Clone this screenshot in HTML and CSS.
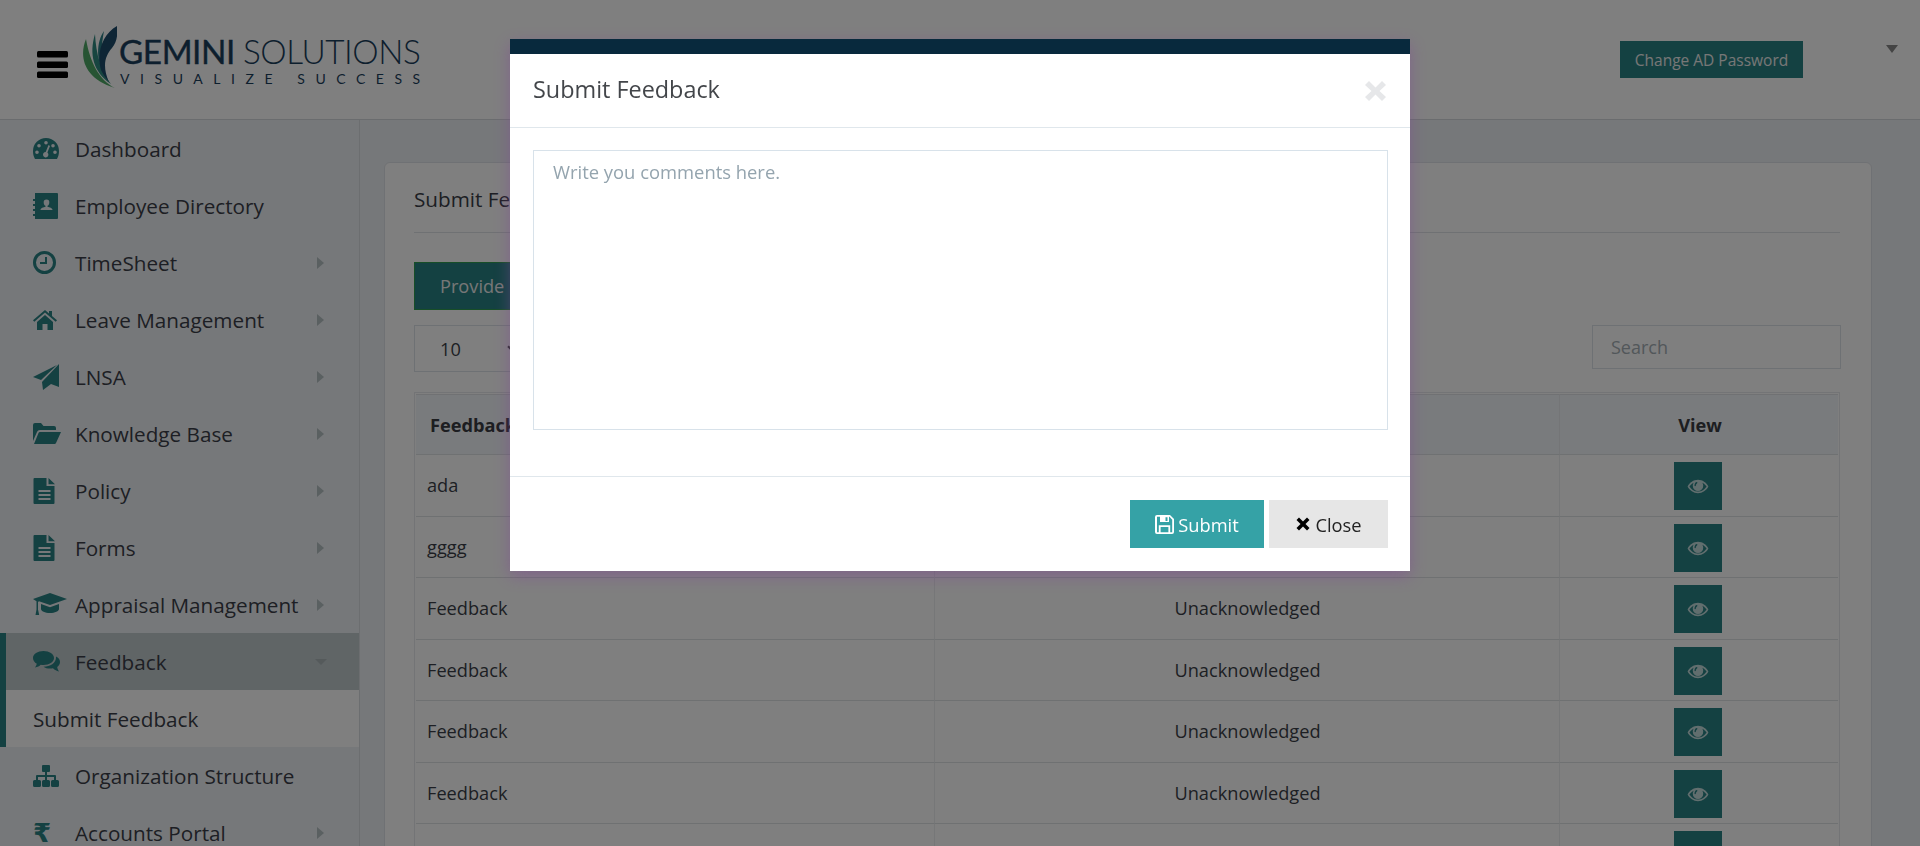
FILE: index.html
```html
<!DOCTYPE html>
<html lang="en">
<head>
<meta charset="utf-8">
<title>Submit Feedback</title>
<link rel="stylesheet" href="styles.css">
</head>
<body>
<svg class="defs" aria-hidden="true">
  <symbol id="i-eye" viewBox="0 0 26 18"><path fill-rule="evenodd" d="M13 1C7.5 1 3 4.4.5 9 3 13.600 7.500 17 13 17s10-3.400 12.500-8C23 4.400 18.500 1 13 1zM2.700 9c1.200-1.900 3-3.500 5-4.600A6.300 6.300 0 0 0 6.700 8a6.300 6.300 0 0 0 12.600 0c0-1.300-.4-2.600-1-3.600 2 1.100 3.800 2.700 5 4.600-2.300 3.700-6 6-10.300 6S5 12.700 2.700 9zM11.500 3.700a.8.800 0 0 1 .8.8c0 1-1.700 1.300-1.900 3.300a.8.800 0 0 1-1.600 0c0-2 1.300-4.100 2.700-4.100z"/></symbol>
  <symbol id="i-file" viewBox="0 0 22 26"><path fill-rule="evenodd" d="M1 0h12v8h8v17a1 1 0 0 1-1 1H1a1 1 0 0 1-1-1V1a1 1 0 0 1 1-1zm14 0l6.500 6.200H15zM5 12v2h12v-2zm0 4v2h12v-2zm0 4v2h12v-2z"/></symbol>
</svg>

<div class="page">
  <header class="topbar">
    <svg class="burger" viewBox="0 0 31 27"><rect y="0" width="31" height="6.500" rx="1.500"/><rect y="10.500" width="31" height="6.500" rx="1.500"/><rect y="20.500" width="31" height="6.500" rx="1.500"/></svg>
    <div class="logo">
      <svg class="leaf" viewBox="0 0 36 63">
        <path fill="#4fa866" d="M5 13C-2 30 2 52 34 62 18 54 9 36 5 13z"/>
        <path fill="#2f8a80" d="M14 8C8 28 12 46 30 58 20 46 15 28 14 8z"/>
        <path fill="#2b7f86" d="M23 5C15 16 15 36 24 50 20 34 20 20 23 5z"/>
        <path fill="#1c4a6b" d="M36 0C22 8 15 26 20 44 24 52 27 54 28 56 21 40 24 30 31 22 36 16 37 8 36 0z"/>
      </svg>
      <div class="logo-text">
        <div class="logo-main"><span class="logo-strong">GEMINI</span> <span class="logo-light">SOLUTIONS</span></div>
        <div class="logo-tag">VISUALIZE SUCCESS</div>
      </div>
    </div>
    <div class="top-actions">
      <a class="ad-btn">Change AD Password</a>
      <span class="user-caret"></span>
    </div>
  </header>

  <div class="main">
    <nav class="sidebar">
      <a class="nav-item"><span class="nav-ico"><svg class="ico" width="26" height="21" viewBox="0 0 26 21"><path fill-rule="evenodd" d="M13 0a13 13 0 0 1 13 13c0 3-.6 5.500-2 8H2c-1.400-2.500-2-5-2-8A13 13 0 0 1 13 0zm0 3a1.800 1.800 0 1 0 0 3.600A1.800 1.800 0 0 0 13 3zM6 6a1.800 1.800 0 1 0 0 3.600A1.800 1.800 0 0 0 6 6zm14 0a1.800 1.800 0 1 0 0 3.600A1.800 1.800 0 0 0 20 6zM4 12.500a1.800 1.800 0 1 0 0 3.600 1.800 1.800 0 0 0 0-3.600zm18 0a1.800 1.800 0 1 0 0 3.600 1.800 1.800 0 0 0 0-3.600zM15.500 7l-2.800 7a2.700 2.700 0 1 0 1.700.6L17 8z"/></svg></span>Dashboard</a>
      <a class="nav-item"><span class="nav-ico"><svg class="ico" width="25" height="26" viewBox="0 0 25 26"><path fill-rule="evenodd" d="M2 0h22a1 1 0 0 1 1 1v24a1 1 0 0 1-1 1H2v-3H0v-2h2v-3H0v-2h2v-3H0v-2h2V8H0V6h2zm11.500 6.500a2.800 2.800 0 0 0-2.800 3c0 1.600.9 3 1.800 3.300v.9c-2 .5-5 1.300-5 3.300h12c0-2-3-2.800-5-3.300v-.9c.9-.3 1.800-1.700 1.800-3.300a2.800 2.800 0 0 0-2.800-3z"/></svg></span>Employee Directory</a>
      <a class="nav-item has-arrow"><span class="nav-ico"><svg class="ico" width="23" height="23" viewBox="0 0 23 23"><path fill-rule="evenodd" d="M11.500 0a11.500 11.500 0 1 1 0 23 11.500 11.500 0 0 1 0-23zm0 3a8.500 8.500 0 1 0 0 17 8.500 8.500 0 0 0 0-17zM12 6h2v7H7v-2h5z"/></svg></span>TimeSheet</a>
      <a class="nav-item has-arrow"><span class="nav-ico"><svg class="ico" width="24" height="20" viewBox="0 0 24 20"><path d="M12 0l4 3.500V1h3v5l5 4.300-1.300 1.500L12 2.600 1.300 11.800 0 10.300zM4 12l8-7 8 7v8h-5.500v-6h-5v6H4z"/></svg></span>Leave Management</a>
      <a class="nav-item has-arrow"><span class="nav-ico"><svg class="ico" width="26" height="26" viewBox="0 0 26 26"><path d="M26 0v23l-8-3-8 6-1-8zM0 13L24 1 8 16z"/></svg></span>LNSA</a>
      <a class="nav-item has-arrow"><span class="nav-ico"><svg class="ico" width="28" height="21" viewBox="0 0 28 21"><path d="M0 18V2a2 2 0 0 1 2-2h6l2.500 3H21a2 2 0 0 1 2 2v2H7c-1.500 0-2.500.8-3 2zM1 21l4.500-11c.3-.7 1-1 1.700-1H28l-5 11c-.3.700-1 1-1.700 1z"/></svg></span>Knowledge Base</a>
      <a class="nav-item has-arrow"><span class="nav-ico"><svg class="ico" width="23" height="26"><use href="#i-file"/></svg></span>Policy</a>
      <a class="nav-item has-arrow"><span class="nav-ico"><svg class="ico" width="23" height="26"><use href="#i-file"/></svg></span>Forms</a>
      <a class="nav-item has-arrow"><span class="nav-ico"><svg class="ico" width="34" height="23" viewBox="0 0 34 23"><path d="M17 0l17 6-17 6L6 8.200 5 9v7.500l1.200 5.500H2.500L3.500 16.500V8.200L0 6zM8 11l9 3.200 9-3.200v5c0 2-4 4-9 4s-9-2-9-4z"/></svg></span>Appraisal Management</a>
      <a class="nav-item nav-active"><span class="nav-ico"><svg class="ico" width="27" height="21" viewBox="0 0 27 21"><path d="M10.500 0C16.300 0 21 3 21 7s-4.700 7-10.500 7c-1 0-1.900-.1-2.800-.3C6.500 15 4.500 16 2 16.500c.8-1 1.500-2.200 1.800-3.700C1.500 11.500 0 9.400 0 7c0-4 4.700-7 10.500-7zM23 5.500c2.500 1.200 4 3.200 4 5.500 0 2-1.100 3.700-2.800 5 .2 1.800 1 3.300 1.800 4.500-2.300-.5-4.300-1.500-6-3.200-1 .2-2 .3-3 .3-2.500 0-4.800-.7-6.500-1.900 6 .1 13-3 12.500-10.200z"/></svg></span>Feedback<span class="arrow-down"></span></a>
      <a class="nav-sub">Submit Feedback</a>
      <a class="nav-item"><span class="nav-ico"><svg class="ico" width="26" height="22" viewBox="0 0 26 22"><path d="M10 0h6a1 1 0 0 1 1 1v5a1 1 0 0 1-1 1h-2v3h8a1 1 0 0 1 1 1v4h1.500A1.500 1.500 0 0 1 26 16.500v4a1.500 1.500 0 0 1-1.500 1.500h-5a1.500 1.500 0 0 1-1.500-1.500v-4a1.500 1.500 0 0 1 1.500-1.500H21v-3h-7v3h1.500a1.500 1.500 0 0 1 1.500 1.500v4a1.500 1.500 0 0 1-1.500 1.500h-5A1.500 1.500 0 0 1 9 20.500v-4A1.500 1.500 0 0 1 10.500 15H12v-3H5v3h1.500A1.500 1.500 0 0 1 8 16.500v4A1.500 1.500 0 0 1 6.500 22h-5A1.500 1.500 0 0 1 0 20.500v-4A1.500 1.500 0 0 1 1.500 15H3v-4a1 1 0 0 1 1-1h8V7h-2a1 1 0 0 1-1-1V1a1 1 0 0 1 1-1z"/></svg></span>Organization Structure</a>
      <a class="nav-item has-arrow"><span class="nav-ico"><span class="rupee">₹</span></span>Accounts Portal</a>
    </nav>

    <section class="content">
      <div class="card">
        <h2 class="card-title">Submit Feedback</h2>
        <a class="provide-btn">Provide Feedback</a>
        <div class="tools">
          <div class="len-select"><span>10</span><span class="chev"></span></div>
          <input class="search" type="text" placeholder="Search">
        </div>
        <div class="table-wrap">
          <table class="grid">
            <thead>
              <tr><th class="c-1">Feedback</th><th class="c-2">Status</th><th class="c-3">View</th></tr>
            </thead>
            <tbody>
              <tr><td>ada</td><td class="mid">Unacknowledged</td><td class="view-cell"><a class="view-btn"><svg class="eye" width="22" height="15"><use href="#i-eye"/></svg></a></td></tr>
              <tr><td>gggg</td><td class="mid">Unacknowledged</td><td class="view-cell"><a class="view-btn"><svg class="eye" width="22" height="15"><use href="#i-eye"/></svg></a></td></tr>
              <tr><td>Feedback</td><td class="mid">Unacknowledged</td><td class="view-cell"><a class="view-btn"><svg class="eye" width="22" height="15"><use href="#i-eye"/></svg></a></td></tr>
              <tr><td>Feedback</td><td class="mid">Unacknowledged</td><td class="view-cell"><a class="view-btn"><svg class="eye" width="22" height="15"><use href="#i-eye"/></svg></a></td></tr>
              <tr><td>Feedback</td><td class="mid">Unacknowledged</td><td class="view-cell"><a class="view-btn"><svg class="eye" width="22" height="15"><use href="#i-eye"/></svg></a></td></tr>
              <tr><td>Feedback</td><td class="mid">Unacknowledged</td><td class="view-cell"><a class="view-btn"><svg class="eye" width="22" height="15"><use href="#i-eye"/></svg></a></td></tr>
              <tr><td>Feedback</td><td class="mid">Unacknowledged</td><td class="view-cell"><a class="view-btn"><svg class="eye" width="22" height="15"><use href="#i-eye"/></svg></a></td></tr>
            </tbody>
          </table>
        </div>
      </div>
    </section>
  </div>
</div>

<div class="backdrop"></div>

<div class="modal">
  <div class="modal-head">
    <h4 class="modal-title">Submit Feedback</h4>
    <svg class="modal-x" width="21" height="20" viewBox="0 0 21 20"><path d="M4 0l6.500 6.500L17 0l4 4-6.500 6 6.500 6-4 4-6.500-6.500L4 20l-4-4 6.500-6L0 4z"/></svg>
  </div>
  <div class="modal-body">
    <textarea class="comment" placeholder="Write you comments here."></textarea>
  </div>
  <div class="modal-foot">
    <button class="btn-submit"><svg class="btn-ico" width="19" height="19" viewBox="0 0 19 19"><path fill-rule="evenodd" d="M2 0h13l4 4v13a2 2 0 0 1-2 2H2a2 2 0 0 1-2-2V2a2 2 0 0 1 2-2zm0 1.800V17.200h1.800v-7h11.400v7h2V4.800L14.500 1.800H14V7H5V1.800zm3.600 10.200v5.200h7.800V12zM10.500 2.300V6h2V2.300z"/></svg>Submit</button>
    <button class="btn-close"><svg class="btn-ico" width="14" height="14" viewBox="0 0 14 14"><path d="M3 .5L7 4.500 11 .5 13.500 3 9.500 7l4 4L11 13.500l-4-4-4 4L.5 11l4-4-4-4z"/></svg>Close</button>
  </div>
</div>
</body>
</html>
```
FILE: styles.css
```css
* { box-sizing: border-box; }
html, body { margin: 0; height: 100%; overflow: hidden; }
body {
  font-family: "Open Sans", "Noto Sans", sans-serif;
  font-size: 18.200px;
  color: #4d4f57;
  background: #edf0f4;
}
.defs { display: none; }
.page { position: relative; z-index: 1; height: 846px; display: flex; flex-direction: column; overflow: hidden; }

/* top bar */
.topbar {
  flex: none;
  height: 120px;
  background: #fff;
  border-bottom: 1px solid #d5d9dc;
  display: flex;
  align-items: flex-start;
  padding: 26px 0 0 37px;
}
.burger { width: 31px; height: 27px; margin: 25px 13px 0 0; fill: #000; flex: none; }
.logo { display: flex; align-items: flex-start; }
.leaf { width: 36px; height: 63px; flex: none; margin-right: 2px; }
.logo-text { padding-top: 7px; color: #1b3f5c; }
.logo-main { font-family: Lato, sans-serif; font-size: 33.300px; line-height: 36px; letter-spacing: -.45px; white-space: nowrap; }
.logo-strong { font-weight: 400; -webkit-text-stroke: .4px #1b3f5c; }
.logo-light { font-weight: 300; }
.logo-tag { font-family: Lato, sans-serif; font-size: 14px; line-height: 16px; letter-spacing: 10.550px; white-space: nowrap; margin-top: 2px; padding-left: 1px; }
.top-actions { margin-left: auto; display: flex; align-items: flex-start; padding-top: 15px; }
.ad-btn {
  display: flex; align-items: center; justify-content: center;
  width: 183px; height: 37px;
  background: #288284; color: #eee; font-size: 15.500px;
}
.user-caret {
  width: 0; height: 0; margin: 4px 22px 0 83px;
  border-left: 6px solid transparent; border-right: 6px solid transparent; border-top: 8px solid #888;
}

.main { flex: 1; display: flex; min-height: 0; }

/* sidebar */
.sidebar { flex: none; width: 360px; border-right: 1px solid #d9dde0; background: #edf0f4; font-size: 20.700px; }
.nav-item, .nav-sub {
  display: flex; align-items: center; height: 57px; position: relative; color: #3b3e48; white-space: nowrap;
}
.nav-item { padding-left: 33px; }
.nav-ico { width: 42px; flex: none; display: flex; align-items: center; }
.ico { fill: #288284; display: block; }
.rupee { font-family: "DejaVu Sans", sans-serif; font-size: 26px; color: #288284; line-height: 1; font-weight: 700; }
.has-arrow::after {
  content: ""; position: absolute; left: 317px; top: 23px;
  border-top: 6px solid transparent; border-bottom: 6px solid transparent; border-left: 7px solid #b4c0c2;
}
.nav-active { background: #c0cacd; border-left: 6px solid #288284; padding-left: 27px; }
.arrow-down {
  position: absolute; left: 309px; top: 26px;
  border-left: 6px solid transparent; border-right: 6px solid transparent; border-top: 6px solid #aab4b7;
}
.nav-sub { background: #fff; border-left: 6px solid #288284; padding-left: 27px; }

/* content */
.content { flex: 1; padding: 42px 48px 0 24px; min-width: 0; }
.card {
  background: #fff; border: 1px solid #dfe3e8; border-radius: 6px 6px 0 0;
  padding: 0 31px 0 29px; height: 900px;
}
.card-title {
  margin: 0; height: 70px; border-bottom: 1px solid #dfe3e6;
  font-size: 20.700px; font-weight: 400; line-height: 72px; color: #3b3e48;
}
.provide-btn {
  display: flex; align-items: center; width: 210px; height: 48px; margin-top: 29px; padding-left: 25px;
  background: #288284; border: 1px solid #2f9c50; color: #eee; font-size: 18.200px;
}
.tools { display: flex; justify-content: space-between; align-items: flex-start; margin-top: 15px; }
.len-select {
  width: 110px; height: 47px; border: 1px solid #dde2e8; display: flex; align-items: center; justify-content: space-between;
  padding: 0 6px 0 25px; color: #3b3e48;
}
.chev { width: 8px; height: 8px; border-right: 2px solid #555; border-bottom: 2px solid #555; transform: rotate(45deg); margin-top: -4px; }
.search {
  width: 249px; height: 44px; border: 1px solid #dde2e8; padding: 0 18px; outline: 0; background: #fff;
  font: inherit; font-size: 18px; color: #555; margin-right: -1px;
}
.search::placeholder { color: #a4aeb5; opacity: 1; }

.table-wrap { margin-top: 20px; border: 1px solid #e6e8ec; padding: 1px 1px 0; }
.grid { width: 100%; border-collapse: separate; border-spacing: 0; table-layout: fixed; color: #3b3e48; }
.grid th { background: #f3f6fa; font-weight: 700; height: 61px; border-top: 1px solid #e0e3e6; border-bottom: 1px solid #dfe2e5; border-right: 1px solid #e8ebee; padding: 0 12px 0 14px; text-align: center; color: #3a3c42; font-size: 18.200px; }
.grid th:first-child { text-align: left; }
.c-1 { width: 519px; }
.c-2 { width: 625px; }
.grid td { padding: 0 10px 1px 11px; border-bottom: 1px solid #dfe2e5; border-right: 1px solid #eceef0; height: 62px; vertical-align: middle; }
.grid tr:nth-child(even) td { height: 61px; }
.grid th:last-child, .grid td:last-child { border-right: 0; }
.mid { text-align: center; }
.grid .view-cell { text-align: center; vertical-align: top; padding: 7px 10px 5px; }
.view-btn {
  display: inline-flex; align-items: center; justify-content: center; vertical-align: top;
  width: 48px; height: 48px; margin-right: 2px; background: #288284;
}
.eye { fill: #fff; opacity: .72; }

/* modal */
.backdrop { position: fixed; inset: 0; z-index: 10; background: rgba(0, 0, 0, .5); }
.modal {
  position: fixed; left: 510px; top: 39px; z-index: 11; width: 900px; height: 532px;
  background: #fff; border-top: 15px solid #08293d;
  box-shadow: 0 5px 15px rgba(130, 70, 150, .5);
  display: flex; flex-direction: column;
}
.modal-head {
  flex: none; height: 74px; border-bottom: 1px solid #e0e7ec; display: flex; align-items: center; justify-content: space-between;
  padding: 0 24px 4px 23px;
}
.modal-title { margin: 0; font-size: 23.400px; font-weight: 400; color: #43464a; }
.modal-x { fill: #e6e7e9; margin-top: 5px; }
.modal-body { flex: none; height: 348px; padding: 22px 22px 0 23px; }
.comment {
  display: block; width: 100%; height: 280px; border: 1px solid #d8e2ea; padding: 8px 19px; resize: none; outline: 0;
  font: inherit; font-size: 18.400px; color: #444;
}
.comment::placeholder { color: #94a4ae; opacity: 1; }
.modal-foot { flex: 1; border-top: 1px solid #e0e7ec; display: flex; justify-content: flex-end; align-items: flex-start; gap: 5px; padding: 23px 22px 0 0; }
.modal-foot button {
  height: 48px; border: 0; display: flex; align-items: center; justify-content: center; font: inherit; font-size: 18.300px; padding: 0;
}
.btn-submit { width: 134px; background: #35a2a6; color: #fff; font-weight: 600; }
.btn-submit .btn-ico { fill: #fff; margin-right: 4px; }
.btn-close { width: 119px; background: #e6e6e6; color: #222; }
.btn-close .btn-ico { fill: #000; margin-right: 5px; margin-left: 1px; }
```
